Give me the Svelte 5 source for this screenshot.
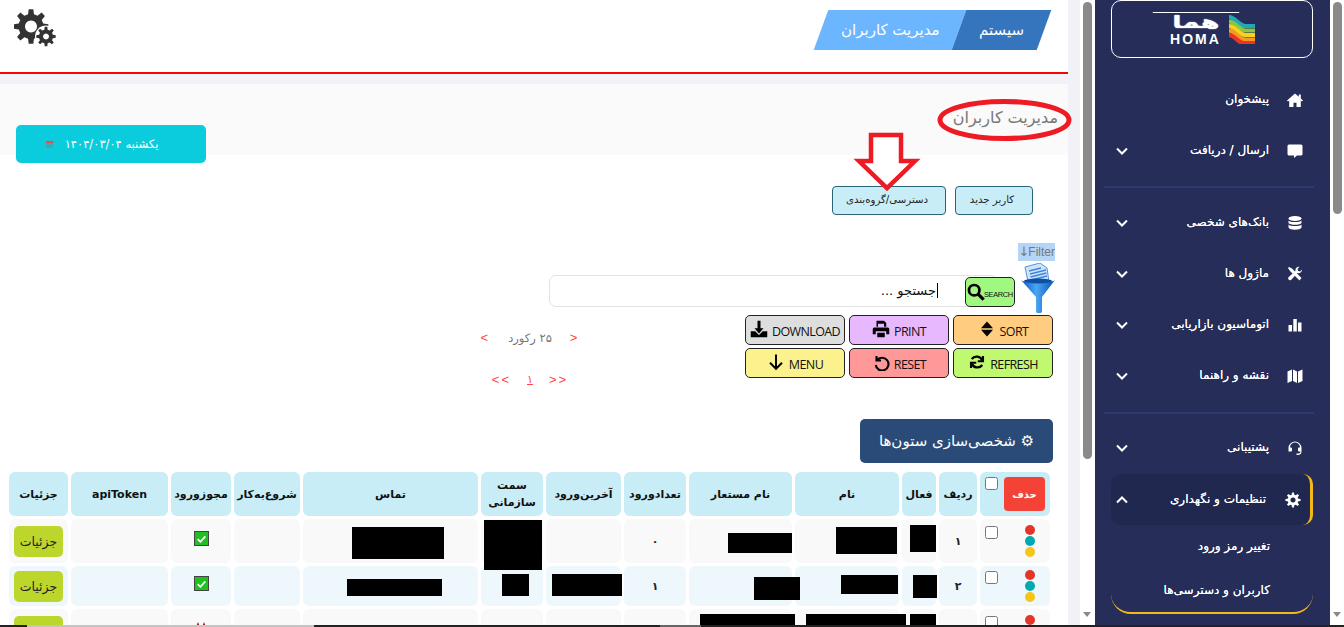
<script>
	// gear outline, used for the header cogs and the settings item
	function gear(cx, cy, r, teeth, depth = 0.72) {
		const step = (Math.PI * 2) / teeth;
		let d = '';
		for (let i = 0; i < teeth; i++) {
			const a = i * step - Math.PI / 2;
			const pts = [
				[a - step * 0.3, r * depth],
				[a - step * 0.17, r],
				[a + step * 0.17, r],
				[a + step * 0.3, r * depth]
			];
			for (const [t, rad] of pts) {
				const x = (cx + Math.cos(t) * rad).toFixed(2);
				const y = (cy + Math.sin(t) * rad).toFixed(2);
				d += (d ? 'L' : 'M') + x + ' ' + y;
			}
		}
		return d + 'Z';
	}

	const cols = [
		{ w: 70, label: '' },
		{ w: 38, label: 'ردیف' },
		{ w: 34, label: 'فعال' },
		{ w: 104, label: 'نام' },
		{ w: 103, label: 'نام مستعار' },
		{ w: 62, label: 'تعدادورود' },
		{ w: 75, label: 'آخرین‌ورود' },
		{ w: 62, label: 'سمت سازمانی' },
		{ w: 175, label: 'تماس' },
		{ w: 66, label: 'شروع‌به‌کار' },
		{ w: 60, label: 'مجوزورود' },
		{ w: 97, label: 'apiToken' },
		{ w: 59, label: 'جزئیات' }
	];

	const rows = [
		{ n: '۱', visits: '۰', ok: true, cls: 'odd h1' },
		{ n: '۲', visits: '۱', ok: true, cls: 'even h2' },
		{ n: '', visits: '', ok: false, cls: 'odd h1' }
	];

	// blacked out personal data, page coordinates [x, y, w, h]
	const redactions = [
		[910, 526, 26, 27], [836, 528, 61, 27], [728, 534, 64, 20], [484, 521, 58, 50], [352, 528, 92, 32],
		[913, 576, 24, 23], [841, 576, 57, 19], [754, 578, 46, 23], [552, 575, 70, 22], [502, 575, 27, 22], [347, 580, 95, 17],
		[910, 615, 26, 14], [806, 615, 100, 14], [700, 615, 95, 14]
	];

	const tools = [
		{ label: 'DOWNLOAD', cls: 'gray', icon: 'download' },
		{ label: 'PRINT', cls: 'violet', icon: 'print' },
		{ label: 'SORT', cls: 'orange', icon: 'sort' },
		{ label: 'MENU', cls: 'yellow', icon: 'down' },
		{ label: 'RESET', cls: 'rose', icon: 'undo' },
		{ label: 'REFRESH', cls: 'lime', icon: 'refresh' }
	];

	const groupA = [
		{ label: 'پیشخوان', icon: 'home' },
		{ label: 'ارسال / دریافت', icon: 'comment', more: true }
	];
	const groupB = [
		{ label: 'بانک‌های شخصی', icon: 'db', more: true },
		{ label: 'ماژول ها', icon: 'wrench', more: true },
		{ label: 'اتوماسیون بازاریابی', icon: 'chart', more: true },
		{ label: 'نقشه و راهنما', icon: 'map', more: true }
	];

	const bands = ['#1fa9b8', '#8cc63f', '#f5d31f', '#f59a1f', '#e8352c'];
</script>

{#snippet toolIcon(name)}
	<svg class="tool-ic" viewBox="0 0 24 24" aria-hidden="true">
		{#if name == 'download'}
			<path d="M10 1h4v10h4l-6 7-6-7h4z" />
			<path d="M1 15h6l5 5 5-5h6v8H1z" />
		{:else if name == 'print'}
			<path d="M6 1h10l3 3v5h-3V5H8v4H6z" />
			<path d="M3 10h18a2 2 0 0 1 2 2v7h-4v-4H5v4H1v-7a2 2 0 0 1 2-2z" />
			<path d="M7 17h10v6H7z" />
		{:else if name == 'sort'}
			<path d="M12 2l8 9H4zM12 22l-8-9h16z" />
		{:else if name == 'down'}
			<path d="M12 2v19M4 13l8 8 8-8" fill="none" stroke="#000" stroke-width="2.6" />
		{:else if name == 'undo'}
			<path d="M6 4v6h6M6.5 10A8.5 8.5 0 1 1 5 16" fill="none" stroke="#000" stroke-width="2.8" />
		{:else if name == 'refresh'}
			<path d="M20 4v7h-7M4 20v-7h7" fill="none" stroke="#000" stroke-width="2.8" />
			<path d="M19 10A8 8 0 0 0 5 8M5 14a8 8 0 0 0 14 2" fill="none" stroke="#000" stroke-width="3" />
		{/if}
	</svg>
{/snippet}

{#snippet navIcon(name)}
	<svg class="nav-ic" viewBox="0 0 16 16" aria-hidden="true">
		{#if name == 'home'}
			<path d="M8 1.5L0 8.5l1 1 1.2-1V15h4.3v-4.2h3V15h4.3V8.5l1.2 1 1-1-2.2-1.9V2.5h-2v2.3z" />
		{:else if name == 'comment'}
			<path d="M2 1.5h12a1.5 1.5 0 0 1 1.5 1.5v8a1.5 1.5 0 0 1-1.500 1.500H10L7 15v-2.500H2A1.500 1.500 0 0 1 .5 11V3A1.500 1.500 0 0 1 2 1.500z" />
		{:else if name == 'db'}
			<ellipse cx="8" cy="3.500" rx="6.500" ry="2.500" />
			<path d="M1.500 5.500C3 7.500 13 7.500 14.500 5.500V8c-1 2.400-12 2.400-13 0zM1.500 9.500c1.500 2 11.500 2 13 0V12.500c-1 3-12 3-13 0z" />
		{:else if name == 'wrench'}
			<path d="M2 1l3 1.500 9.500 9.500-2 2.500L3 5 1 2z" />
			<path d="M15 3.500a3.500 3.500 0 0 1-4.500 3.500L4.500 13.500a1.800 1.800 0 0 1-2.800-2.500L8.500 5A3.500 3.500 0 0 1 12.500.8L10.500 3l.7 2 2 .5z" />
		{:else if name == 'chart'}
			<path d="M1.500 8h3.500v6.500H1.500zM6.300 2h3.500v12.500H6.300zM11 5.500h3.500v9H11z" />
		{:else if name == 'map'}
			<path d="M.5 3.500L5 1.500v11.500L.5 15zM6 1.500l4 2V15l-4-2zM11 3.500l4.500-2V13L11 15z" />
		{:else if name == 'headset'}
			<path d="M8 1.500A6.500 6.500 0 0 0 1.500 8v3.500h2.500a1 1 0 0 0 1-1V8.500a1 1 0 0 0-1-1H3a5 5 0 0 1 10 0h-1a1 1 0 0 0-1 1v2a1 1 0 0 0 1 1h1.500a2 2 0 0 1-2 2H9.500v1.500H11.500a3.500 3.500 0 0 0 3-3.500V8A6.500 6.500 0 0 0 8 1.500z" />
		{:else if name == 'gear'}
			<path fill-rule="evenodd" d="{gear(8, 8, 7.6, 8)}M8 5.400a2.600 2.600 0 1 0 .01 0z" />
		{/if}
	</svg>
{/snippet}

{#snippet navItem(item)}
	<div class="nav-item">
		{#if item.more}
			<svg class="chev" viewBox="0 0 12 8" aria-hidden="true"><path d="M1 1.500l5 5 5-5" /></svg>
		{/if}
		<span class="nav-label">{item.label}</span>
		{@render navIcon(item.icon)}
	</div>
{/snippet}

<div class="page">
	<main>
		<header>
			<svg class="cogs" viewBox="0 0 42 38" aria-hidden="true">
				<path fill-rule="evenodd" d="{gear(17, 17.500, 17.500, 8)}M17 11.500a6 6 0 1 0 .01 0z" />
				<circle cx="32" cy="27.500" r="11" fill="#fff" />
				<path fill-rule="evenodd" d="{gear(32, 27.500, 9.800, 8)}M32 24.500a3 3 0 1 0 .01 0z" />
			</svg>
			<nav class="crumbs">
				<span class="crumb light"><b>مدیریت کاربران</b></span>
				<span class="crumb dark"><b>سیستم</b></span>
			</nav>
		</header>

		<section class="band">
			<div class="date">
				<span class="cal"></span>
				<span>یکشنبه ۱۴۰۴/۰۳/۰۴</span>
			</div>
			<h1>مدیریت کاربران</h1>
		</section>

		<div class="actions">
			<button class="act wide">دسترسی/گروه‌بندی</button>
			<button class="act">کاربر جدید</button>
		</div>

		<div class="filter-row"><span class="filter-tag"><i>↓</i>Filter</span></div>

		<div class="search-row">
			<div class="search-input"><span class="caret">جستجو ...</span></div>
			<button class="search-btn">
				<svg viewBox="0 0 20 20" aria-hidden="true"><circle cx="8" cy="8" r="5.800" fill="none" stroke="#000" stroke-width="3" /><path d="M12 12l6.500 6.500" stroke="#000" stroke-width="3.600" /></svg>
				<span>SEARCH</span>
			</button>
			<svg class="funnel" viewBox="0 0 34 50" aria-hidden="true">
				<defs>
					<linearGradient id="fn" x1="0" x2="1" y1="0" y2="0">
						<stop offset="0" stop-color="#0a55c0" />
						<stop offset="0.45" stop-color="#4aa6f2" />
						<stop offset="1" stop-color="#0a4fb0" />
					</linearGradient>
				</defs>
				<path d="M4 4L19 0l7 5 2 14-20 4z" fill="#cfe4fb" stroke="#4d96e6" />
				<path d="M8 8l12-3M9 11l16-4M9.500 14l16-4M10 17l16-4" stroke="#3f86d8" stroke-width="1.500" />
				<path d="M0 17c4 4 30 4 34 0L21 34v13a3 3 0 0 1-6 1V34z" fill="url(#fn)" />
				<ellipse cx="17" cy="18" rx="14" ry="2.500" fill="#0b4fa8" />
			</svg>
		</div>

		<div class="tool-row">
			<div class="pager" dir="ltr">
				<div class="pager-line first">
					<span class="red">&lt;</span>
					<span class="count" dir="rtl">۲۵ رکورد</span>
					<span class="red">&gt;</span>
				</div>
				<div class="pager-line second">
					<span class="red">&lt;&lt;</span>
					<span class="red page-no">۱</span>
					<span class="red">&gt;&gt;</span>
				</div>
			</div>
			<div class="tool-grid">
				{#each tools as t}
					<button class="tool {t.cls}">{@render toolIcon(t.icon)}<span>{t.label}</span></button>
				{/each}
			</div>
		</div>

		<div class="custom-row">
			<button class="custom">⚙ شخصی‌سازی ستون‌ها</button>
		</div>

		<div class="table-wrap">
			<table dir="rtl">
				<colgroup>
					{#each cols as c}<col style="width:{c.w}px" />{/each}
				</colgroup>
				<thead>
					<tr>
						<th class="sel-cell">
							<div class="sel">
								<input type="checkbox" />
								<button class="del">حذف</button>
							</div>
						</th>
						{#each cols.slice(1) as c}
							<th>{c.label}</th>
						{/each}
					</tr>
				</thead>
				<tbody>
					{#each rows as r}
						<tr class={r.cls}>
							<td class="sel-cell">
								<div class="sel">
									<input type="checkbox" />
									<div class="dots"><i class="d1"></i><i class="d2"></i><i class="d3"></i></div>
								</div>
							</td>
							<td>{r.n}</td>
							<td></td>
							<td></td>
							<td></td>
							<td>{r.visits}</td>
							<td></td>
							<td></td>
							<td></td>
							<td></td>
							{#if r.ok}
								<td><span class="tick"><svg viewBox="0 0 12 12" aria-hidden="true"><path d="M2.500 6.500l2.500 2.500 4.500-5" /></svg></span></td>
							{:else}
								<td class="denied"><svg class="cross" viewBox="0 0 12 5" aria-hidden="true"><path d="M3 0l2 5H1zM9 0l2 5H7z" /></svg></td>
							{/if}
							<td></td>
							<td><button class="more">جزئیات</button></td>
						</tr>
					{/each}
				</tbody>
			</table>
			{#each redactions as b}
				<div class="redact" style="left:{b[0] - 6}px;top:{b[1] - 470}px;width:{b[2]}px;height:{b[3]}px"></div>
			{/each}
		</div>
	</main>

	<div class="gutter"></div>

	<div class="scrollbar"><div class="thumb inner"></div><span class="arrow"></span></div>

	<aside>
		<div class="logo">
			<div class="word">
				<span class="fa">هما</span>
				<span class="en">HOMA</span>
			</div>
			<svg class="wave" viewBox="0 0 28 30" aria-hidden="true">
				{#each bands as c, i}
					<path d="M1 {i * 4.500 + 1}c6 0 10 7 16 9h10v4H16C10 {i * 4.500 + 13} 6 {i * 4.500 + 6} 1 {i * 4.500 + 5}z" fill={c} />
				{/each}
			</svg>
		</div>

		<div class="nav-top">
			{#each groupA as item}{@render navItem(item)}{/each}
		</div>
		<hr />
		{#each groupB as item}{@render navItem(item)}{/each}
		<hr class="second" />
		{@render navItem({ label: 'پشتیبانی', icon: 'headset', more: true })}

		<div class="open-group">
			<div class="nav-item active">
				<svg class="chev" viewBox="0 0 12 8" aria-hidden="true"><path d="M1 6.500l5-5 5 5" /></svg>
				<span class="nav-label">تنظیمات و نگهداری</span>
				{@render navIcon('gear')}
			</div>
			<div class="sub">تغییر رمز ورود</div>
			<div class="sub">کاربران و دسترسی‌ها</div>
		</div>
	</aside>

	<div class="scrollbar last"><div class="thumb outer"></div><span class="arrow"></span></div>

	<div class="hbar"><div class="hthumb"></div><div class="hthumb2"></div></div>

	<!-- red marks somebody drew on the screenshot -->
	<svg class="mark-oval" viewBox="0 0 133 42" aria-hidden="true"><ellipse cx="66.500" cy="21" rx="64.500" ry="18.500" /></svg>
	<svg class="mark-arrow" viewBox="0 0 62 58" aria-hidden="true"><path d="M15 2h30v26h14L31 55 3 28h12z" /></svg>
</div>

<style>
	:global(body) {
		margin: 0;
		background: #fff;
	}

	.page {
		position: relative;
		display: flex;
		width: 1344px;
		height: 627px;
		overflow: hidden;
		font-family: "DejaVu Sans", "Noto Sans", sans-serif;
		color: #111;
	}

	main {
		flex: 0 0 1068px;
		height: 627px;
		overflow: hidden;
		background: #fff;
	}

	.gutter {
		flex: 0 0 12px;
		background: #f0f2f7;
	}

	/* header */
	header {
		display: flex;
		justify-content: space-between;
		box-sizing: border-box;
		height: 74px;
		padding: 9px 24px 0 14px;
		border-bottom: 2px solid #f00;
	}

	.cogs {
		width: 42px;
		height: 38px;
		fill: #333;
	}

	.crumbs {
		display: flex;
		height: 40px;
		margin-top: 1px;
	}

	.crumb {
		display: flex;
		align-items: center;
		justify-content: center;
		height: 40px;
		transform: skewX(-20deg);
		color: #fff;
		font-size: 15px;
		white-space: nowrap;
	}

	.crumb b {
		font-weight: 400;
		transform: skewX(20deg);
	}

	.crumb.light {
		width: 138px;
		background: #6bb6ff;
	}

	.crumb.dark {
		width: 85px;
		background: #3575bd;
	}

	/* title band */
	.band {
		display: flex;
		justify-content: space-between;
		align-items: flex-start;
		box-sizing: border-box;
		height: 81px;
		padding: 0 10px 0 16px;
		border-top: 10px solid #f0f2f7;
		background: #fafafa;
	}

	h1 {
		margin: 22px 0 0;
		font-size: 16px;
		font-weight: 400;
		color: #777;
		line-height: 24px;
	}

	.date {
		display: flex;
		align-items: center;
		justify-content: center;
		gap: 12px;
		box-sizing: border-box;
		width: 190px;
		height: 38px;
		margin-top: 41px;
		padding-right: 18px;
		border-radius: 5px;
		background: #0accdd;
		color: #fff;
		font-size: 11.500px;
	}

	.cal {
		width: 7px;
		height: 7px;
		background: linear-gradient(#d9534f 0 35%, #3aa9b5 35%);
	}

	/* top actions */
	.actions {
		display: flex;
		justify-content: flex-end;
		gap: 9px;
		margin-top: 31px;
		padding-right: 35px;
	}

	.act {
		width: 78px;
		height: 29px;
		padding: 0 4px 3px 0;
		border: 1px solid #2a6478;
		border-radius: 4px;
		background: #c9edf6;
		color: #222;
		font: 10.200px "DejaVu Sans", sans-serif;
	}

	.act.wide {
		width: 114px;
	}

	.filter-row {
		display: flex;
		justify-content: flex-end;
		height: 20px;
		margin-top: 28px;
		padding-right: 13px;
	}

	.filter-tag {
		height: 18px;
		background: #b4d5f5;
		color: #777;
		font: 12px/18px "Liberation Sans", sans-serif;
	}

	.filter-tag i {
		font: 13px/18px "DejaVu Sans", sans-serif;
		margin-right: -1px;
	}

	.search-row {
		display: flex;
		justify-content: flex-end;
		box-sizing: border-box;
		height: 52px;
		padding-top: 12px;
		padding-right: 13px;
	}

	.search-input {
		box-sizing: border-box;
		width: 449px;
		height: 32px;
		margin-right: -33px;
		padding-right: 59px;
		border: 1px solid #e3e3e3;
		border-radius: 7px;
		font-size: 13px;
		line-height: 29px;
		direction: rtl;
		text-align: right;
	}

	.caret {
		border-right: 1px solid #000;
		padding-right: 1px;
	}

	.search-btn {
		position: relative;
		display: flex;
		align-items: center;
		box-sizing: border-box;
		width: 50px;
		height: 30px;
		margin-top: 2px;
		padding: 0 0 0 1px;
		border: 1px solid #222;
		border-radius: 5px;
		background: #a0f880;
	}

	.search-btn svg {
		width: 18px;
		height: 18px;
		flex: none;
	}

	.search-btn span {
		margin: 5px 0 0 -1px;
		font: 7.500px "Liberation Sans", sans-serif;
		letter-spacing: -0.4px;
		color: #111;
	}

	.funnel {
		width: 34px;
		height: 50px;
		margin: -12px 0 0 6px;
	}

	/* tools and pager */
	.tool-row {
		display: flex;
		justify-content: flex-end;
		height: 104px;
		padding-right: 15px;
	}

	.pager {
		width: 120px;
		margin-right: 155px;
		font-size: 12px;
	}

	.pager-line {
		display: flex;
		justify-content: center;
		line-height: 16px;
	}

	.pager-line.first {
		gap: 18px;
		margin-top: 15px;
	}

	.pager-line.second {
		gap: 16px;
		margin-top: 26px;
	}

	.red {
		color: #f44;
		font: 13px/16px "Liberation Sans", sans-serif;
		letter-spacing: 2px;
	}

	.page-no {
		text-decoration: underline;
		font-family: "DejaVu Sans", sans-serif;
		font-size: 11px;
		letter-spacing: 0;
	}

	.count {
		color: #777;
		font-size: 11.500px;
		white-space: nowrap;
	}

	.tool-grid {
		display: grid;
		grid-template-columns: repeat(3, 100px);
		grid-auto-rows: 30px;
		gap: 3px 4px;
		width: 308px;
	}

	.tool {
		display: flex;
		align-items: center;
		justify-content: center;
		gap: 4px;
		padding: 0;
		border: 1px solid #222;
		border-radius: 5px;
		font: 12.500px "Open Sans", sans-serif;
		letter-spacing: -0.6px;
		color: #111;
	}

	.tool span {
		margin-top: 3px;
	}

	.tool-ic {
		width: 18px;
		height: 18px;
		flex: none;
		margin-top: -2px;
	}

	.gray { background: #dedede; }
	.violet { background: #e8b8ff; }
	.orange { background: #ffcc80; }
	.yellow { background: #fbf28e; }
	.rose { background: #ff9999; }
	.lime { background: #c0f870; }

	.custom-row {
		display: flex;
		justify-content: flex-end;
		padding-right: 15px;
	}

	.custom {
		width: 193px;
		height: 44px;
		padding: 0;
		border: 0;
		border-radius: 5px;
		background: #2a4a78;
		color: #fff;
		font: 15px "DejaVu Sans", sans-serif;
		direction: rtl;
	}

	/* table */
	.table-wrap {
		position: relative;
		width: 1047px;
		margin: 6px 0 0 6px;
	}

	table {
		table-layout: fixed;
		width: 1047px;
		border-collapse: separate;
		border-spacing: 3px;
	}

	th, td {
		padding: 0;
		text-align: center;
		border-radius: 6px;
		overflow: hidden;
	}

	th {
		height: 44px;
		background: #c9edf6;
		font-size: 11px;
		font-weight: 700;
		line-height: 17px;
		color: #111;
	}

	td {
		font-size: 11px;
		font-weight: 700;
		color: #222;
	}

	.odd td { background: #f9f9f9; }
	.even td { background: #edf7fc; }
	.h1 td { height: 44px; }
	.h2 td { height: 40px; }

	th.sel-cell, td.sel-cell {
		vertical-align: top;
	}

	.sel {
		display: flex;
		direction: ltr;
		justify-content: space-between;
		align-items: flex-start;
		box-sizing: border-box;
		padding: 7px 5px 0;
	}

	th .sel {
		padding-top: 5px;
	}

	.even .sel {
		padding-top: 5px;
	}

	.sel input {
		width: 13px;
		height: 13px;
		margin: 0;
	}

	.del {
		width: 41px;
		height: 34px;
		padding: 0;
		border: 0;
		border-radius: 4px;
		background: #f44336;
		color: #fff;
		font: 700 10px "DejaVu Sans", sans-serif;
	}

	.dots {
		display: flex;
		flex-direction: column;
		gap: 1px;
		width: 10px;
		margin: -1px 10px 0 0;
	}

	.dots i {
		display: block;
		width: 10px;
		height: 10px;
		border-radius: 50%;
	}

	.d1 { background: #e53529; }
	.d2 { background: #00aab0; }
	.d3 { background: #f5c518; }

	.tick {
		display: inline-flex;
		box-sizing: border-box;
		width: 15px;
		height: 15px;
		margin-top: -6px;
		vertical-align: middle;
		border: 1px solid #444;
		background: #1fc01f;
	}

	.tick svg {
		width: 13px;
		height: 13px;
		fill: none;
		stroke: #fff;
		stroke-width: 1.600;
	}

	td.denied {
		vertical-align: top;
	}

	.cross {
		display: block;
		width: 12px;
		height: 5px;
		margin: 13px auto 0;
		fill: #a5201a;
	}

	.more {
		display: block;
		width: 49px;
		height: 31px;
		margin: 0 auto;
		padding: 0;
		border: 0;
		border-radius: 5px;
		background: #bcd62b;
		color: #222;
		font: 12.500px "DejaVu Sans", sans-serif;
	}

	.redact {
		position: absolute;
		background: #000;
	}

	.mark-oval, .mark-arrow {
		position: absolute;
		overflow: visible;
	}

	.mark-oval {
		left: 938px;
		top: 99px;
		width: 133px;
		height: 42px;
		fill: none;
		stroke: #ed1c24;
		stroke-width: 5;
	}

	.mark-arrow {
		left: 856px;
		top: 133px;
		width: 62px;
		height: 58px;
		fill: #fff;
		stroke: #ed1c24;
		stroke-width: 4.500;
	}

	/* window scrollbars */
	.scrollbar {
		position: relative;
		flex: 0 0 15px;
		background: #fff;
	}

	.scrollbar.last {
		flex: 0 0 14px;
	}

	.thumb {
		width: 9px;
		margin: 2px 0 0 3px;
		border-radius: 5px;
		background: #8a8a8a;
	}

	.thumb.inner { height: 457px; }
	.thumb.outer { height: 212px; }

	.arrow {
		position: absolute;
		left: 3px;
		top: 612px;
		border: solid transparent;
		border-width: 5px 4.500px 0;
		border-top-color: #8a8a8a;
	}

	.hbar {
		position: absolute;
		left: 0;
		right: 0;
		bottom: 0;
		height: 2px;
		background: #222;
	}

	.hthumb {
		position: absolute;
		left: 27px;
		width: 287px;
		height: 2px;
		background: #c4c4c4;
	}

	.hthumb2 {
		position: absolute;
		left: 660px;
		width: 41px;
		height: 2px;
		background: #666;
	}

	/* sidebar */
	aside {
		flex: 0 0 235px;
		box-sizing: border-box;
		height: 627px;
		padding: 0 17px 0 16px;
		background: #252d58;
		color: #fff;
	}

	.logo {
		display: flex;
		align-items: center;
		justify-content: center;
		gap: 5px;
		box-sizing: border-box;
		height: 58px;
		border: 1px solid #fff;
		border-radius: 10px;
	}

	.word {
		display: flex;
		flex-direction: column;
		align-items: center;
		width: 54px;
		color: #fff;
	}

	.fa {
		display: block;
		width: 54px;
		border-top: 1px solid #fff;
		font-size: 17px;
		font-weight: 700;
		line-height: 19px;
		text-align: center;
		transform: scaleX(1.6);
		text-shadow: 0 0 1px #fff;
	}

	.en {
		font: 700 14px/14px "Liberation Sans", sans-serif;
		letter-spacing: 2px;
	}

	.wave {
		width: 28px;
		height: 30px;
	}

	.nav-top {
		margin-top: 16px;
	}

	.nav-item {
		position: relative;
		display: flex;
		align-items: center;
		justify-content: flex-end;
		box-sizing: border-box;
		height: 51px;
		padding: 0 10px 0 5px;
	}

	.nav-label {
		margin: -2px 18px 0 0;
		font-size: 12px;
		text-shadow: 0 0 0.5px #fff;
		direction: rtl;
		white-space: nowrap;
	}

	.nav-ic {
		width: 16px;
		height: 16px;
		fill: #fff;
		flex: none;
	}

	.chev {
		position: absolute;
		left: 5px;
		top: 50%;
		width: 12px;
		height: 8px;
		margin-top: -4px;
		fill: none;
		stroke: #fff;
		stroke-width: 2;
	}

	hr {
		height: 2px;
		margin: 10px -1px 9px -7px;
		border: 0;
		background: #2e3a70;
	}

	hr.second {
		margin: 11px -1px 8px -7px;
	}

	.open-group {
		box-sizing: border-box;
		height: 140px;
		margin-top: 1px;
		border-bottom: 2px solid #f5b81a;
		border-radius: 0 0 20px 20px;
	}

	.nav-item.active {
		padding-right: 9px;
		border-right: 3px solid #f5b81a;
		border-radius: 10px;
		background: #212850;
	}

	.active .nav-label {
		margin-right: 19px;
	}

	.sub {
		height: 44px;
		padding-right: 43px;
		font-size: 12px;
		text-shadow: 0 0 0.5px #fff;
		line-height: 42px;
		text-align: right;
		direction: rtl;
	}
</style>
